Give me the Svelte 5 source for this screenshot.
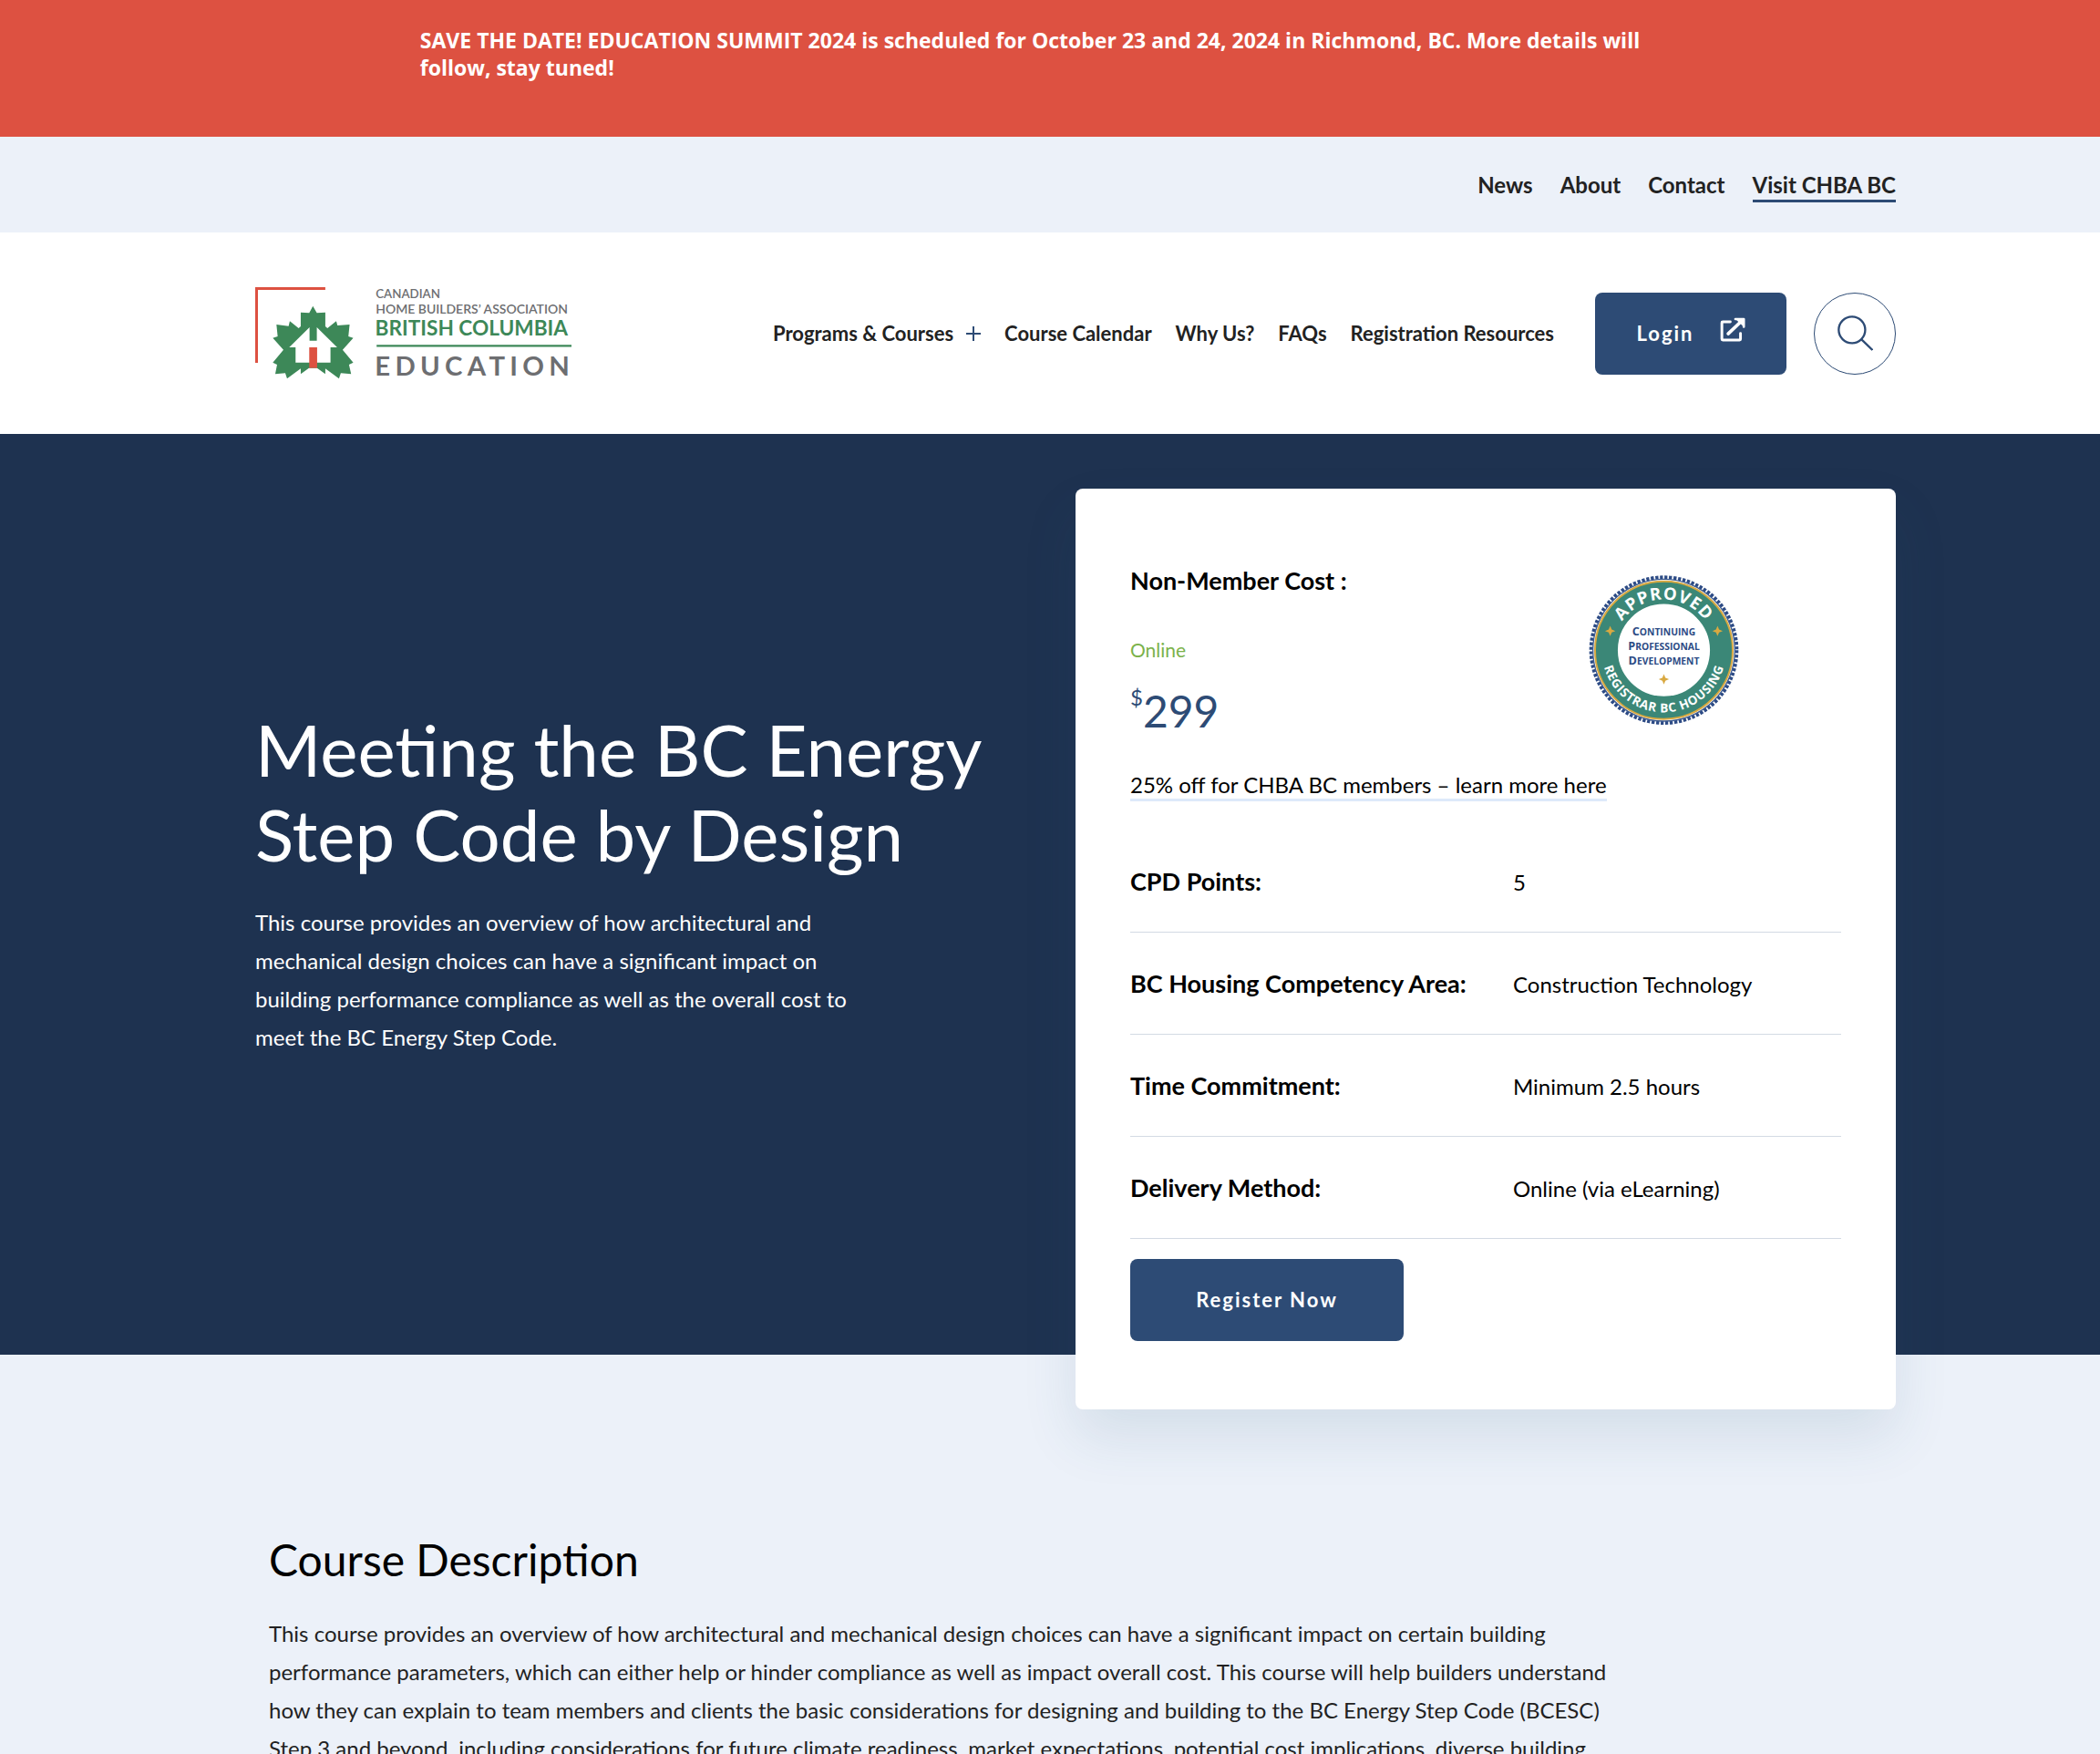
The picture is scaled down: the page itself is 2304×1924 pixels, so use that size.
<script lang="ts">
  const topLinks = ['News', 'About', 'Contact'];
  const mainLinks = ['Course Calendar', 'Why Us?', 'FAQs', 'Registration Resources'];
  const details = [
    { label: 'CPD Points:', value: '5' },
    { label: 'BC Housing Competency Area:', value: 'Construction Technology' },
    { label: 'Time Commitment:', value: 'Minimum 2.5 hours' },
    { label: 'Delivery Method:', value: 'Online (via eLearning)' }
  ];
</script>

<div class="page">
  <div class="banner">
    <p>
      SAVE THE DATE! EDUCATION SUMMIT 2024 is scheduled for October 23 and 24, 2024 in Richmond, BC.
      More details will follow, stay tuned!
    </p>
  </div>

  <div class="topbar">
    <nav class="container topnav" aria-label="Secondary">
      {#each topLinks as link}
        <a href="#{link}">{link}</a>
      {/each}
      <a class="visit" href="#chba">Visit CHBA BC</a>
    </nav>
  </div>

  <header>
    <div class="container bar">
      <a class="logo" href="#home" aria-label="CHBA BC Education home">
        <svg viewBox="60 75 1045 303" width="348" height="101" aria-hidden="true">
          <path d="M64.500 324V79.500H291" fill="none" stroke="#dd5141" stroke-width="9" />
          <g transform="translate(102 120)">
            <path
              fill="#3d8858"
              d="M148 17L161 40L189 38V84L196 90L225 67L229 81L269 78L265 117L281 122L246 161L281 203L267 210L274 241L240 238L234 256L189 223V241L162 221H135L108 241V223L63 256L57 238L24 241L30 210L16 203L51 161L16 122L32 117L28 78L68 83L72 67L101 90L108 84V38L136 40Z"
            />
            <path
              fill="#fff"
              d="M137 87V131H161V87L228 153H206V203H91V153H70Z"
            />
            <path fill="#dd5141" d="M136 153H162V221H136Z" />
          </g>
          <g font-family="Lato, sans-serif" fill="#6d6e71">
            <text x="457" y="112" font-size="40" font-weight="600">CANADIAN</text>
            <text x="457" y="162" font-size="42" font-weight="600">HOME BUILDERS’ ASSOCIATION</text>
            <text x="455" y="233" font-size="68" font-weight="700" fill="#3d8858">BRITISH COLUMBIA</text>
            <text x="454" y="367" font-size="88" font-weight="700" letter-spacing="16">EDUCATION</text>
          </g>
          <path d="M460 268H1102" stroke="#3d8858" stroke-width="7" />
        </svg>
      </a>

      <nav class="mainnav" aria-label="Main">
        <a class="programs" href="#programs">
          Programs &amp; Courses
          <svg viewBox="0 0 16 16" width="16" height="16" aria-hidden="true">
            <path d="M0 8H16M8 0V16" stroke="#2d4b75" stroke-width="2" />
          </svg>
        </a>
        {#each mainLinks as link}
          <a href="#{link}">{link}</a>
        {/each}
      </nav>

      <a class="button login" href="#login">
        Login
        <svg viewBox="48 52 84 82" width="28" height="27" aria-hidden="true">
          <g fill="none" stroke="#fff" stroke-width="9" stroke-linecap="round" stroke-linejoin="round">
            <path d="M82 67H57Q54 67 54 70V125Q54 128 57 128H113Q116 128 116 125V106" />
            <path d="M75 107L120 64" stroke-width="11" />
            <path d="M99 58H127V84" stroke-width="8" />
          </g>
          <path d="M97 56H129V86Z" fill="#fff" />
        </svg>
      </a>
      <button class="search" type="button" aria-label="Search">
        <svg viewBox="436 41 118 118" width="39" height="39" aria-hidden="true">
          <g fill="none" stroke="#2d4b75" stroke-width="7">
            <circle cx="484" cy="89" r="44" />
            <path d="M515 120L552 156" />
          </g>
        </svg>
      </button>
    </div>
  </header>

  <section class="hero">
    <div class="container split">
      <div class="intro">
        <h1>Meeting the BC Energy Step Code by Design</h1>
        <p>
          This course provides an overview of how architectural and mechanical design choices can
          have a significant impact on building performance compliance as well as the overall cost
          to meet the BC Energy Step Code.
        </p>
      </div>

      <aside class="card">
        <div class="cost">
          <div>
            <h2>Non-Member Cost :</h2>
            <p class="mode">Online</p>
            <p class="price"><sup>$</sup>299</p>
          </div>
          <svg class="seal" viewBox="69 64 496 496" width="165" height="165" role="img" aria-label="Approved continuing professional development">
            <defs>
              <path id="arc-top" d="M150 311A167 167 0 0 1 484 311" />
              <path id="arc-bottom" d="M112 311A205 205 0 0 0 522 311" />
            </defs>
            <circle cx="317" cy="311" r="240" fill="#fff" stroke="#2d4b85" stroke-width="12" stroke-dasharray="10 5.080" />
            <circle cx="317" cy="311" r="234" fill="#fff" stroke="#3f5c90" stroke-width="4" />
            <circle cx="317" cy="311" r="190" fill="none" stroke="#3b8777" stroke-width="76" />
            <circle cx="317" cy="311" r="227" fill="none" stroke="#d9a941" stroke-width="6" />
            <g font-family="'Open Sans', sans-serif" font-weight="700" fill="#fff" text-anchor="middle">
              <text font-size="56" letter-spacing="3">
                <textPath href="#arc-top" startOffset="50%">APPROVED</textPath>
              </text>
              <text font-size="41" letter-spacing="2">
                <textPath href="#arc-bottom" startOffset="50%">REGISTRAR BC HOUSING</textPath>
              </text>
            </g>
            <g font-family="'Open Sans', sans-serif" font-weight="700" fill="#2d4b85" text-anchor="middle" font-size="31">
              <text x="317" y="262"><tspan font-size="38">C</tspan>ONTINUING</text>
              <text x="317" y="311"><tspan font-size="38">P</tspan>ROFESSIONAL</text>
              <text x="317" y="360"><tspan font-size="38">D</tspan>EVELOPMENT</text>
            </g>
            <g fill="#d9a941">
              <path d="M140 231L145 243L157 248L145 253L140 265L135 253L123 248L135 243Z" />
              <path d="M494 231L499 243L511 248L499 253L494 265L489 253L477 248L489 243Z" />
              <path d="M317 390L322 402L334 407L322 412L317 424L312 412L300 407L312 402Z" />
            </g>
          </svg>
        </div>
        <a class="offer" href="#members">25% off for CHBA BC members – learn more here</a>
        <dl>
          {#each details as item}
            <div class="row">
              <dt>{item.label}</dt>
              <dd>{item.value}</dd>
            </div>
          {/each}
        </dl>
        <a class="button register" href="#register">Register Now</a>
      </aside>
    </div>
  </section>

  <main>
    <div class="container">
      <div class="description">
        <h2>Course Description</h2>
        <p>
          This course provides an overview of how architectural and mechanical design choices can
          have a significant impact on certain building performance parameters, which can either
          help or hinder compliance as well as impact overall cost. This course will help builders
          understand how they can explain to team members and clients the basic considerations for
          designing and building to the BC Energy Step Code (BCESC) Step 3 and beyond, including
          considerations for future climate readiness, market expectations, potential cost
          implications, diverse building
        </p>
      </div>
    </div>
  </main>
</div>

<style>
  :global(body) {
    margin: 0;
    background: #ecf1f9;
  }
  .page {
    height: 100vh;
    overflow: hidden;
    font-family: Lato, Carlito, sans-serif;
    font-size: 24px;
    line-height: 42px;
    color: #222;
  }
  .page * {
    box-sizing: border-box;
  }
  h1, h2, p, dl, dd {
    margin: 0;
  }
  a {
    color: inherit;
    text-decoration: none;
  }
  .container {
    width: calc(100% - 60px);
    max-width: 1856px;
    margin: 0 auto;
    padding-left: 56px;
  }
  .banner {
    background: #dd5141;
    padding: 29px 0 61px;
  }
  .banner p {
    width: 60%;
    margin: 0 auto;
    font: 700 23px/30px 'Open Sans', sans-serif;
    color: #fff;
  }
  .topbar {
    background: #ecf1f9;
    padding: 37px 0 33px;
  }
  .topnav {
    display: flex;
    justify-content: flex-end;
    gap: 30px;
    font-weight: 700;
    line-height: 32px;
  }
  .topnav a {
    border-bottom: 3px solid transparent;
  }
  .topnav .visit {
    border-color: #2d4b75;
  }
  header {
    background: #fff;
    padding: 60px 0;
  }
  .bar {
    display: flex;
    align-items: center;
  }
  .logo,
  .logo svg {
    display: block;
    overflow: visible;
  }
  .mainnav {
    display: flex;
    gap: 26px;
    margin: 0 45px 0 auto;
    font-size: 22px;
    font-weight: 700;
    white-space: nowrap;
  }
  .programs {
    display: flex;
    align-items: center;
    gap: 14px;
  }
  .button {
    display: flex;
    align-items: center;
    justify-content: center;
    height: 90px;
    border-radius: 8px;
    background: #2d4b75;
    color: #fff;
    font-size: 22px;
    font-weight: 700;
    letter-spacing: 2px;
  }
  .login {
    gap: 28px;
    width: 210px;
  }
  .login svg {
    margin-bottom: 8px;
  }
  .search {
    display: grid;
    place-items: center;
    width: 90px;
    height: 90px;
    margin-left: 30px;
    padding: 0;
    border: 1px solid #2d4b75;
    border-radius: 50%;
    background: #fff;
  }
  .hero {
    background: #1e3250;
    padding-top: 60px;
  }
  .split {
    display: grid;
    grid-template-columns: 1fr 1fr;
  }
  .intro {
    align-self: center;
    padding-bottom: 88px;
    color: #fff;
  }
  h1 {
    margin-bottom: 29px;
    font-size: 78px;
    font-weight: 400;
    line-height: 93px;
  }
  .intro p {
    max-width: 670px;
  }
  .card {
    margin-bottom: -60px;
    padding: 84px 60px 75px;
    border-radius: 8px;
    background: #fff;
    box-shadow: 0 30px 60px rgba(45, 90, 120, 0.12);
    color: #000;
  }
  .cost {
    display: flex;
    justify-content: space-between;
    padding-right: 112px;
  }
  .card h2,
  dt {
    font-size: 27px;
    font-weight: 700;
    line-height: 33px;
  }
  .mode {
    margin-top: 45px;
    font-size: 21px;
    line-height: 30px;
    color: #7bb24a;
  }
  .price {
    margin-top: 22px;
    font-size: 48px;
    line-height: 60px;
    color: #2d4b75;
  }
  .price sup {
    font-size: 24px;
    line-height: 0;
    vertical-align: 24px;
  }
  .seal {
    margin-top: 11px;
  }
  .offer {
    display: inline-block;
    margin-top: 36px;
    border-bottom: 3px solid #dde9fa;
    line-height: 30px;
  }
  dl {
    margin-top: 29px;
  }
  .row {
    display: grid;
    grid-template-columns: 7fr 6fr;
    align-items: baseline;
    padding: 36px 0 33px;
    border-bottom: 1px solid #d3dae4;
  }
  .register {
    width: 300px;
    margin-top: 22px;
  }
  main {
    padding: 195px 0 0;
  }
  .description {
    width: 84%;
    padding: 0 15px;
  }
  .description h2 {
    margin-bottom: 30px;
    font-size: 48px;
    font-weight: 400;
    line-height: 60px;
    color: #000;
  }
</style>
